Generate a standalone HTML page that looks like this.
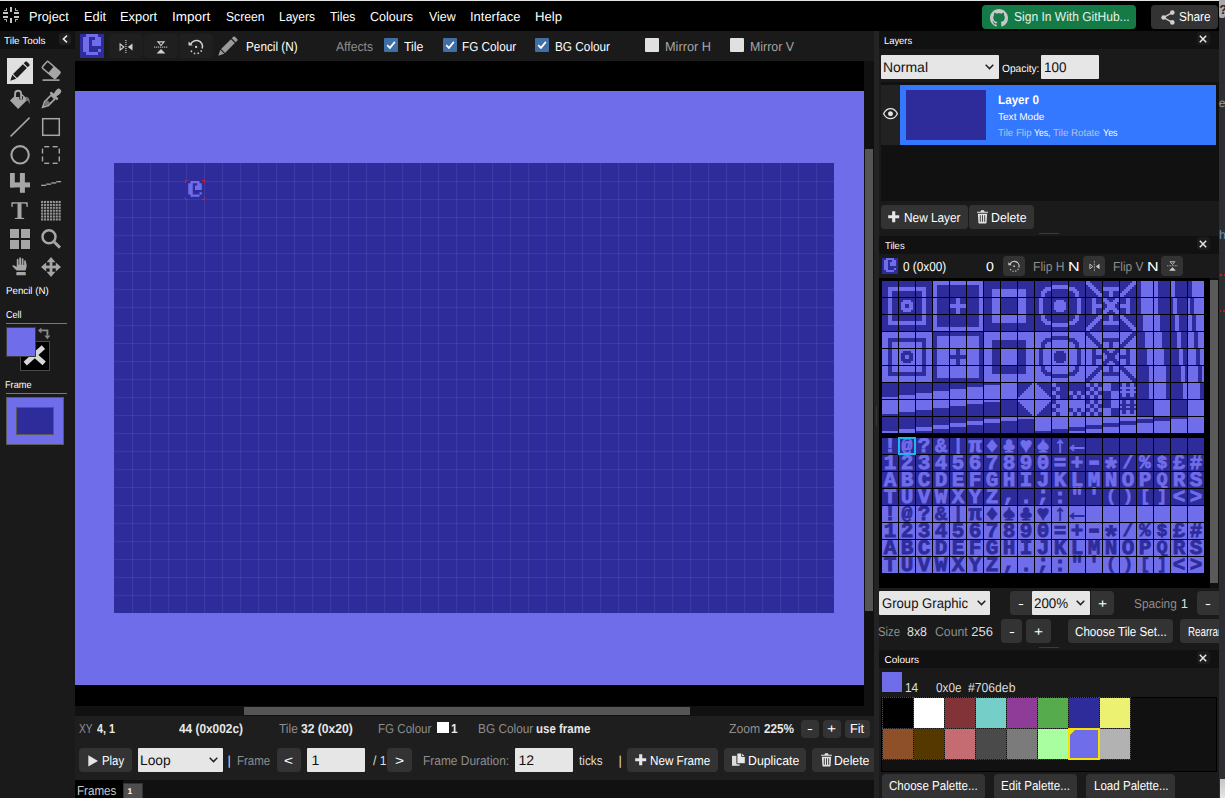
<!DOCTYPE html>
<html lang="en"><head><meta charset="utf-8"><title>Tile Editor</title>
<style>
html,body{margin:0;padding:0;}
body{width:1225px;height:798px;overflow:hidden;background:#1a1a1a;position:relative;font-family:"Liberation Sans",sans-serif;text-rendering:geometricPrecision;}
.t{position:absolute;white-space:nowrap;line-height:16px;height:16px;transform-origin:0 50%;}
.btn{position:absolute;background:#2b2b2b;border-radius:4px;box-sizing:border-box;}
.sel{position:absolute;background:#e6e6e6;box-sizing:border-box;border-radius:1px;}
svg{position:absolute;overflow:visible;}

.chk{position:absolute;width:14px;height:14px;box-sizing:border-box;border-radius:1px;}
.chk.on{background:#3f6fa5;}
.chk.off{background:#e0e0e0;}

</style></head><body>
<div id="app-chrome">
<div class="" style="position:absolute;left:0px;top:0px;width:1219px;height:31px;background:#000;"></div>
<div class="" style="position:absolute;left:0px;top:0px;width:1219px;height:1px;background:#e4e4e4;"></div>
<div class="" style="position:absolute;left:1219px;top:0px;width:6px;height:798px;background:#2b2d31;"></div>
<div class="" style="position:absolute;left:1219px;top:0px;width:6px;height:18px;background:#a9a9a9;border-radius:0 0 2px 2px;"></div>
<span class="t " style="left:1219.15px;top:2px;font-size:13.0px;color:#222;font-weight:bold;">?</span>
<div class="" style="position:absolute;left:0px;top:31px;width:75px;height:767px;background:#1a1a1a;"></div>
<div class="" style="position:absolute;left:0px;top:31px;width:75px;height:18px;background:#111;"></div>
<div class="" style="position:absolute;left:75px;top:31px;width:799px;height:30px;background:#1a1a1a;"></div>
<div class="" style="position:absolute;left:75px;top:61px;width:789px;height:645px;background:#000;"></div>
<div class="" style="position:absolute;left:75px;top:91px;width:789px;height:594px;background:#706deb;"></div>
<div class="" style="position:absolute;left:864px;top:61px;width:10px;height:655px;background:#111;"></div>
<div class="" style="position:absolute;left:865px;top:149px;width:8px;height:462px;background:#555;"></div>
<div class="" style="position:absolute;left:75px;top:706px;width:789px;height:10px;background:#111;"></div>
<div class="" style="position:absolute;left:244px;top:707px;width:446px;height:8px;background:#555;"></div>
<div class="" style="position:absolute;left:75px;top:716px;width:799px;height:64px;background:#1e1e1e;"></div>
<div class="" style="position:absolute;left:75px;top:780px;width:799px;height:18px;background:#111;"></div>
<div class="" style="position:absolute;left:874px;top:31px;width:5px;height:767px;background:#232323;"></div>
<div class="" style="position:absolute;left:876px;top:406px;width:1px;height:20px;background:#383838;"></div>
<div class="" style="position:absolute;left:879px;top:31px;width:340px;height:767px;background:#1a1a1a;"></div>
</div>
<nav id="menubar">
<svg style="left:3px;top:7px" width="16" height="16" viewBox="0 0 16 16" shape-rendering="crispEdges"><g fill="#c4c4c4"><rect x="7" y="0" width="2" height="5"/><rect x="7" y="11" width="2" height="5"/><rect x="0" y="5" width="5" height="2"/><rect x="0" y="9" width="5" height="2"/><rect x="11" y="5" width="5" height="2"/><rect x="11" y="9" width="5" height="2"/></g><g fill="#a8a8a8"><rect x="1" y="3" width="3" height="1"/><rect x="3" y="1" width="1" height="3"/><rect x="12" y="1" width="1" height="3"/><rect x="12" y="3" width="3" height="1"/><rect x="1" y="12" width="3" height="1"/><rect x="3" y="12" width="1" height="3"/><rect x="12" y="12" width="1" height="3"/><rect x="12" y="12" width="3" height="1"/></g></svg>
<span class="t " style="left:29.48px;top:9px;font-size:13.0px;color:#fff;transform:scaleX(0.9806);">Project</span>
<span class="t " style="left:83.98px;top:9px;font-size:13.0px;color:#fff;transform:scaleX(0.9850);">Edit</span>
<span class="t " style="left:120.47px;top:9px;font-size:13.0px;color:#fff;transform:scaleX(0.9890);">Export</span>
<span class="t " style="left:172.28px;top:9px;font-size:13.0px;color:#fff;transform:scaleX(1.0387);">Import</span>
<span class="t " style="left:225.89px;top:9px;font-size:13.0px;color:#fff;transform:scaleX(0.9332);">Screen</span>
<span class="t " style="left:278.54px;top:9px;font-size:13.0px;color:#fff;transform:scaleX(0.9215);">Layers</span>
<span class="t " style="left:330.26px;top:9px;font-size:13.0px;color:#fff;transform:scaleX(0.9376);">Tiles</span>
<span class="t " style="left:370.38px;top:9px;font-size:13.0px;color:#fff;transform:scaleX(0.9615);">Colours</span>
<span class="t " style="left:428.88px;top:9px;font-size:13.0px;color:#fff;transform:scaleX(0.9526);">View</span>
<span class="t " style="left:470.34px;top:9px;font-size:13.0px;color:#fff;transform:scaleX(0.9949);">Interface</span>
<span class="t " style="left:534.95px;top:9px;font-size:13.0px;color:#fff;transform:scaleX(1.0111);">Help</span>
<div class="" style="position:absolute;left:982px;top:5px;width:154px;height:24px;background:#147a46;border-radius:4px;"></div>
<svg style="left:990px;top:8.8px" width="18" height="18" viewBox="0 0 16 16"><path fill="#c8c8c8" d="M8 0C3.58 0 0 3.58 0 8c0 3.54 2.29 6.53 5.47 7.59.4.07.55-.17.55-.38 0-.19-.01-.82-.01-1.49-2.01.37-2.53-.49-2.69-.94-.09-.23-.48-.94-.82-1.13-.28-.15-.68-.52-.01-.53.63-.01 1.08.58 1.23.82.72 1.21 1.87.87 2.33.66.07-.52.28-.87.51-1.07-1.78-.2-3.64-.89-3.64-3.95 0-.87.31-1.59.82-2.15-.08-.2-.36-1.02.08-2.12 0 0 .67-.21 2.2.82.64-.18 1.32-.27 2-.27s1.36.09 2 .27c1.53-1.04 2.2-.82 2.2-.82.44 1.1.16 1.92.08 2.12.51.56.82 1.27.82 2.15 0 3.07-1.87 3.75-3.65 3.95.29.25.54.73.54 1.48 0 1.07-.01 1.93-.01 2.2 0 .21.15.46.55.38A8.01 8.01 0 0 0 16 8c0-4.42-3.58-8-8-8z"/></svg>
<span class="t " style="left:1013.90px;top:9px;font-size:13.0px;color:#e6f2ea;transform:scaleX(0.9250);">Sign In With GitHub...</span>
<div class="" style="position:absolute;left:1151px;top:5px;width:67px;height:24px;background:#333333;border-radius:4px;"></div>
<svg style="left:1161px;top:10.4px" width="14" height="15" viewBox="0 0 14 15"><g fill="#d0d0d0"><circle cx="11.3" cy="2.6" r="2.3"/><circle cx="2.6" cy="7.5" r="2.3"/><circle cx="11.3" cy="12.4" r="2.3"/></g><path d="M11.3 2.6L2.6 7.5l8.7 4.9" stroke="#d0d0d0" stroke-width="1.4" fill="none"/></svg>
<span class="t " style="left:1179.41px;top:9px;font-size:13.0px;color:#fff;transform:scaleX(0.9129);">Share</span>
</nav>
<aside id="tile-tools">
<span class="t " style="left:4.00px;top:34px;font-size:10.0px;color:#fff;transform:scaleX(0.9927);">Tile Tools</span>
<div class="" style="position:absolute;left:59px;top:33px;width:12px;height:12px;background:#1f1f1f;border-radius:3px;"></div>
<svg style="left:62px;top:35px" width="6" height="8" viewBox="0 0 6 8"><path d="M5 0.6L1.4 4 5 7.4" stroke="#e8e8e8" stroke-width="1.6" fill="none"/></svg>
<div class="" style="position:absolute;left:7px;top:58px;width:26px;height:26px;background:#e0e0e0;"></div>
<svg style="left:10px;top:61px" width="20" height="20" viewBox="0 0 20 20"><polygon fill="#1c1c1c" points="0.30,19.70 6.24,17.72 2.28,13.76"/><polygon fill="#1c1c1c" points="7.02,16.94 16.85,7.11 12.89,3.15 3.06,12.98"/><polygon fill="#1c1c1c" points="17.69,6.26 19.53,4.43 19.53,3.30 16.70,0.47 15.57,0.47 13.74,2.31"/></svg>
<svg style="left:41px;top:61px" width="20" height="20" viewBox="0 0 20 20"><g transform="rotate(41 10.2 8.9)"><rect x="0.8" y="3.8" width="18.8" height="10.2" rx="2" fill="#a6a6a6"/><rect x="2.3" y="5.3" width="7.6" height="7.2" fill="#1a1a1a"/></g><rect x="1.5" y="18.3" width="17" height="1.6" fill="#a6a6a6"/></svg>
<svg style="left:10px;top:89px" width="20" height="20" viewBox="0 0 20 20"><polygon points="0,11.5 4.1,7.4 6.3,7.9 10.1,7.9 12.5,5.2 17.7,10.4 8.1,20" fill="#a6a6a6"/><path d="M11.1 7V10.4" stroke="#1a1a1a" stroke-width="3.6" fill="none"/><path d="M5.1 7.8V4.7a3 3 0 0 1 6 0V9.6" stroke="#a6a6a6" stroke-width="1.9" fill="none" stroke-linecap="round"/><path d="M16.4 7.6c2.6 0.8 3.6 3.4 3.5 7.8-1.2-2.8-2.2-4-4.4-4.6z" fill="#777"/></svg>
<svg style="left:41px;top:89px" width="20" height="20" viewBox="0 0 20 20"><g transform="rotate(45 10 10)"><rect x="7.4" y="-3.4" width="5.2" height="7" rx="2.6" fill="#a6a6a6"/><rect x="8" y="2" width="4" height="3.4" fill="#a6a6a6"/><rect x="4.8" y="4.4" width="10.4" height="2.5" rx="0.9" fill="#a6a6a6"/><path d="M7.3 7.2h5.4v9.2l-2.7 5.4-2.7-5.4z" fill="none" stroke="#a6a6a6" stroke-width="1.6"/><path d="M8.1 13.4h3.8v3.2l-1.9 3.8-1.9-3.8z" fill="#777"/></g></svg>
<svg style="left:10px;top:117px" width="20" height="20" viewBox="0 0 20 20"><path d="M0.6 19.4L19.6 0.6" stroke="#a6a6a6" stroke-width="1.5"/></svg>
<svg style="left:41px;top:117px" width="20" height="20" viewBox="0 0 20 20"><rect x="1.7" y="1.7" width="16.6" height="16.6" fill="none" stroke="#a6a6a6" stroke-width="1.5"/></svg>
<svg style="left:10px;top:145px" width="20" height="20" viewBox="0 0 20 20"><circle cx="10.1" cy="9.8" r="8.7" fill="none" stroke="#a6a6a6" stroke-width="2.1"/></svg>
<svg style="left:41px;top:145px" width="20" height="20" viewBox="0 0 20 20"><g fill="#a6a6a6"><rect x="3.2" y="1" width="5" height="1.4"/><rect x="11.6" y="1" width="5" height="1.4"/><rect x="3.2" y="17.6" width="5" height="1.4"/><rect x="11.6" y="17.6" width="5" height="1.4"/><rect x="0.8" y="3.6" width="1.4" height="5"/><rect x="0.8" y="11.4" width="1.4" height="5"/><rect x="17.6" y="3.6" width="1.4" height="5"/><rect x="17.6" y="11.4" width="1.4" height="5"/></g></svg>
<svg style="left:10px;top:173px" width="20" height="20" viewBox="0 0 20 20"><g fill="#a6a6a6"><rect x="0" y="0" width="4.8" height="14.4"/><rect x="0" y="9.4" width="20" height="5"/><rect x="9.9" y="0" width="5" height="19.8"/></g></svg>
<svg style="left:41px;top:173px" width="20" height="20" viewBox="0 0 20 20"><g fill="#a6a6a6"><rect x="0.2" y="11.7" width="5" height="1.3"/><rect x="5.2" y="10.5" width="5" height="1.3"/><rect x="10.3" y="9.3" width="5" height="1.3"/><rect x="15.3" y="8" width="4.8" height="1.3"/></g></svg>
<span style="position:absolute;left:11.2px;top:196.4px;will-change:transform;font-family:'Liberation Serif',serif;font-weight:bold;font-size:25.6px;line-height:30px;color:#a6a6a6;transform:scaleX(1.0);transform-origin:0 0;">T</span>
<svg style="left:41px;top:201px" width="20" height="20" viewBox="0 0 20 20"><g fill="#959595"><rect x="0.10" y="-0.10" width="2.1" height="2.1"/><rect x="3.02" y="-0.10" width="2.1" height="2.1"/><rect x="5.94" y="-0.10" width="2.1" height="2.1"/><rect x="8.86" y="-0.10" width="2.1" height="2.1"/><rect x="11.78" y="-0.10" width="2.1" height="2.1"/><rect x="14.70" y="-0.10" width="2.1" height="2.1"/><rect x="17.62" y="-0.10" width="2.1" height="2.1"/><rect x="0.10" y="2.82" width="2.1" height="2.1"/><rect x="3.02" y="2.82" width="2.1" height="2.1"/><rect x="5.94" y="2.82" width="2.1" height="2.1"/><rect x="8.86" y="2.82" width="2.1" height="2.1"/><rect x="11.78" y="2.82" width="2.1" height="2.1"/><rect x="14.70" y="2.82" width="2.1" height="2.1"/><rect x="17.62" y="2.82" width="2.1" height="2.1"/><rect x="0.10" y="5.74" width="2.1" height="2.1"/><rect x="3.02" y="5.74" width="2.1" height="2.1"/><rect x="5.94" y="5.74" width="2.1" height="2.1"/><rect x="8.86" y="5.74" width="2.1" height="2.1"/><rect x="11.78" y="5.74" width="2.1" height="2.1"/><rect x="14.70" y="5.74" width="2.1" height="2.1"/><rect x="17.62" y="5.74" width="2.1" height="2.1"/><rect x="0.10" y="8.66" width="2.1" height="2.1"/><rect x="3.02" y="8.66" width="2.1" height="2.1"/><rect x="5.94" y="8.66" width="2.1" height="2.1"/><rect x="8.86" y="8.66" width="2.1" height="2.1"/><rect x="11.78" y="8.66" width="2.1" height="2.1"/><rect x="14.70" y="8.66" width="2.1" height="2.1"/><rect x="17.62" y="8.66" width="2.1" height="2.1"/><rect x="0.10" y="11.58" width="2.1" height="2.1"/><rect x="3.02" y="11.58" width="2.1" height="2.1"/><rect x="5.94" y="11.58" width="2.1" height="2.1"/><rect x="8.86" y="11.58" width="2.1" height="2.1"/><rect x="11.78" y="11.58" width="2.1" height="2.1"/><rect x="14.70" y="11.58" width="2.1" height="2.1"/><rect x="17.62" y="11.58" width="2.1" height="2.1"/><rect x="0.10" y="14.50" width="2.1" height="2.1"/><rect x="3.02" y="14.50" width="2.1" height="2.1"/><rect x="5.94" y="14.50" width="2.1" height="2.1"/><rect x="8.86" y="14.50" width="2.1" height="2.1"/><rect x="11.78" y="14.50" width="2.1" height="2.1"/><rect x="14.70" y="14.50" width="2.1" height="2.1"/><rect x="17.62" y="14.50" width="2.1" height="2.1"/><rect x="0.10" y="17.42" width="2.1" height="2.1"/><rect x="3.02" y="17.42" width="2.1" height="2.1"/><rect x="5.94" y="17.42" width="2.1" height="2.1"/><rect x="8.86" y="17.42" width="2.1" height="2.1"/><rect x="11.78" y="17.42" width="2.1" height="2.1"/><rect x="14.70" y="17.42" width="2.1" height="2.1"/><rect x="17.62" y="17.42" width="2.1" height="2.1"/></g></svg>
<svg style="left:10px;top:229px" width="20" height="20" viewBox="0 0 20 20"><g fill="#a6a6a6"><rect x="0" y="0" width="9" height="9"/><rect x="11" y="0" width="9" height="9"/><rect x="0" y="11" width="9" height="9"/><rect x="11" y="11" width="9" height="9"/></g></svg>
<svg style="left:41px;top:229px" width="20" height="20" viewBox="0 0 20 20"><circle cx="8" cy="7.8" r="6.5" fill="none" stroke="#a6a6a6" stroke-width="2.5"/><path d="M13.2 13L19 18.6" stroke="#a6a6a6" stroke-width="3"/></svg>
<svg style="left:10px;top:257px" width="20" height="20" viewBox="0 0 20 20"><g fill="#a6a6a6" transform="translate(0.6 0.3) scale(1.1 1)"><rect x="5.2" y="14.8" width="8.6" height="3.2" rx="0.6"/><path d="M5.4 13.2L1.8 9.2c-.5-.9.6-1.6 1.4-1L5.6 9.4V2.4c0-1.1 1.6-1.1 1.6 0V7.4h.6V.9c0-1.1 1.7-1.1 1.7 0V7.4h.6V1.7c0-1.1 1.6-1.1 1.6 0V7.6h.6V3.6c0-1 1.5-1 1.5 0l.8 4.2c0 2.8-.5 3.6-1 5.4z"/></g></svg>
<svg style="left:41px;top:257px" width="20" height="20" viewBox="0 0 20 20"><g fill="#a6a6a6"><rect x="8.6" y="3" width="2.8" height="14"/><rect x="3" y="8.6" width="14" height="2.8"/><path d="M10 0l4.4 5.2H5.6zM10 20l4.4-5.2H5.6zM0 10l5.2-4.4v8.8zM20 10l-5.2-4.4v8.8z"/></g></svg>
<span class="t " style="left:5.72px;top:284px;font-size:10.0px;color:#fff;transform:scaleX(0.9741);">Pencil (N)</span>
<span class="t " style="left:5.75px;top:308px;font-size:10.0px;color:#fff;transform:scaleX(0.8944);">Cell</span>
<div class="" style="position:absolute;left:6px;top:323px;width:61px;height:1px;background:#787878;"></div>
<div class="" style="position:absolute;left:20px;top:341px;width:30px;height:30px;background:#000;box-sizing:border-box;border:1px solid #4a4a4a;"></div>
<svg style="left:21px;top:342px;overflow:hidden" width="28" height="28" viewBox="21 342 28 28"><path d="M25.2 363.6L43.4 347.2M28 349L44.2 363.4" stroke="#d6d6d6" stroke-width="5"/></svg>
<div class="" style="position:absolute;left:6px;top:327px;width:30px;height:30px;background:#706deb;box-sizing:border-box;border:1px solid #3c3c3c;"></div>
<svg style="left:38px;top:327px" width="12" height="12" viewBox="0 0 12 12"><path d="M2.4 3.4H9.4V8.6" stroke="#8a8a8a" stroke-width="1.9" fill="none"/><path d="M0 3.4l3.4-3v6zM9.4 12.2l-3-3.8h6z" fill="#8a8a8a"/></svg>
<span class="t " style="left:5.46px;top:378px;font-size:10.0px;color:#fff;transform:scaleX(0.9203);">Frame</span>
<div class="" style="position:absolute;left:6px;top:393px;width:61px;height:1px;background:#787878;"></div>
<div class="" style="position:absolute;left:6px;top:397px;width:58px;height:48px;background:#706deb;box-sizing:border-box;border:1px solid #5a5a5a;"></div>
<div class="" style="position:absolute;left:16px;top:407px;width:38px;height:28px;background:#2e2c9b;box-sizing:border-box;border:1px solid #5a5a5a;"></div>
</aside>
<div id="tool-options">
<svg style="left:80px;top:34px" width="24" height="24" shape-rendering="crispEdges"><rect x="0" y="0" width="24" height="24" fill="#2e2c9b"/><rect x="6" y="0" width="12" height="3" fill="#706deb"/><rect x="3" y="3" width="6" height="3" fill="#706deb"/><rect x="15" y="3" width="6" height="3" fill="#706deb"/><rect x="3" y="6" width="6" height="3" fill="#706deb"/><rect x="12" y="6" width="9" height="3" fill="#706deb"/><rect x="3" y="9" width="6" height="3" fill="#706deb"/><rect x="12" y="9" width="9" height="3" fill="#706deb"/><rect x="3" y="12" width="6" height="3" fill="#706deb"/><rect x="3" y="15" width="6" height="3" fill="#706deb"/><rect x="18" y="15" width="3" height="3" fill="#706deb"/><rect x="6" y="18" width="12" height="3" fill="#706deb"/></svg>
<div class="" style="position:absolute;left:109px;top:34px;width:34px;height:24px;background:#1f1f1f;border-radius:4px;"></div>
<svg style="left:119px;top:39.8px" width="14.00" height="14.00" viewBox="0 0 14 14"><path d="M1.1 4L4.9 7 1.1 10z" fill="none" stroke="#d0d0d0" stroke-width="1.1"/><path d="M13.5 3.4L8.8 7l4.7 3.6z" fill="#d0d0d0"/><path d="M6.9 0v13.6" stroke="#d0d0d0" stroke-width="1.2" stroke-dasharray="1 1"/></svg>
<div class="" style="position:absolute;left:144px;top:34px;width:34px;height:24px;background:#1f1f1f;border-radius:4px;"></div>
<svg style="left:154.1px;top:40.5px" width="14.00" height="13.00" viewBox="0 0 14 13"><path d="M3.9 0.9L7 4.5 10.1 0.9z" fill="none" stroke="#d0d0d0" stroke-width="1.1"/><path d="M2.6 12.6L7 7.9l4.4 4.7z" fill="#d0d0d0"/><path d="M0.2 6.1h13.4" stroke="#d0d0d0" stroke-width="1.2" stroke-dasharray="1 1"/></svg>
<div class="" style="position:absolute;left:179px;top:34px;width:34px;height:24px;background:#1f1f1f;border-radius:4px;"></div>
<svg style="left:188.4px;top:40px" width="16.00" height="15.00" viewBox="0 0 16 15"><path d="M2.6 4.6A6.1 6.1 0 0 1 14.2 8.6" fill="none" stroke="#d0d0d0" stroke-width="1.5"/><path d="M0.5 1.6L4.8 5.6H0.5z" fill="#d0d0d0"/><path d="M13.6 10.4A6.1 6.1 0 0 1 2.3 9" fill="none" stroke="#d0d0d0" stroke-width="1.6" stroke-dasharray="1.5 2.2"/><rect x="7.1" y="5.9" width="2" height="2" fill="#d0d0d0"/></svg>
<svg style="left:218px;top:36px" width="20" height="20" viewBox="0 0 20 20"><polygon fill="#9a9a9a" points="0.30,19.70 6.24,17.72 2.28,13.76"/><polygon fill="#9a9a9a" points="7.02,16.94 16.85,7.11 12.89,3.15 3.06,12.98"/><polygon fill="#9a9a9a" points="17.69,6.26 19.53,4.43 19.53,3.30 16.70,0.47 15.57,0.47 13.74,2.31"/></svg>
<span class="t " style="left:245.56px;top:39px;font-size:13.0px;color:#fff;transform:scaleX(0.9050);">Pencil (N)</span>
<span class="t " style="left:336.00px;top:39px;font-size:13.0px;color:#8e8e8e;transform:scaleX(0.9359);">Affects</span>
<div class="chk on" style="left:384px;top:38px"><svg style="left:2px;top:2px" width="10" height="10" viewBox="0 0 10 10"><path d="M1.2 5.2L3.9 7.9 8.9 1.9" stroke="#fff" stroke-width="1.7" fill="none"/></svg></div>
<span class="t " style="left:404.25px;top:39px;font-size:13.0px;color:#fff;transform:scaleX(0.9424);">Tile</span>
<div class="chk on" style="left:443px;top:38px"><svg style="left:2px;top:2px" width="10" height="10" viewBox="0 0 10 10"><path d="M1.2 5.2L3.9 7.9 8.9 1.9" stroke="#fff" stroke-width="1.7" fill="none"/></svg></div>
<span class="t " style="left:461.86px;top:39px;font-size:13.0px;color:#fff;transform:scaleX(0.9020);">FG Colour</span>
<div class="chk on" style="left:535px;top:38px"><svg style="left:2px;top:2px" width="10" height="10" viewBox="0 0 10 10"><path d="M1.2 5.2L3.9 7.9 8.9 1.9" stroke="#fff" stroke-width="1.7" fill="none"/></svg></div>
<span class="t " style="left:554.66px;top:39px;font-size:13.0px;color:#fff;transform:scaleX(0.9070);">BG Colour</span>
<div class="chk off" style="left:645px;top:38px"></div>
<span class="t " style="left:664.98px;top:39px;font-size:13.0px;color:#a4a4a4;transform:scaleX(0.9810);">Mirror H</span>
<div class="chk off" style="left:730px;top:38px"></div>
<span class="t " style="left:750.01px;top:39px;font-size:13.0px;color:#a4a4a4;transform:scaleX(0.9532);">Mirror V</span>
</div>
<main id="canvas-view">
<svg style="left:114px;top:163px" width="720" height="450"><rect width="720" height="450" fill="#2e2c9b" shape-rendering="crispEdges"/><g fill="#ffffff" fill-opacity="0.07"><rect x="17.85" y="0" width="1.3" height="450"/><rect x="35.85" y="0" width="1.3" height="450"/><rect x="53.85" y="0" width="1.3" height="450"/><rect x="71.85" y="0" width="1.3" height="450"/><rect x="89.85" y="0" width="1.3" height="450"/><rect x="107.85" y="0" width="1.3" height="450"/><rect x="125.85" y="0" width="1.3" height="450"/><rect x="143.85" y="0" width="1.3" height="450"/><rect x="161.85" y="0" width="1.3" height="450"/><rect x="179.85" y="0" width="1.3" height="450"/><rect x="197.85" y="0" width="1.3" height="450"/><rect x="215.85" y="0" width="1.3" height="450"/><rect x="233.85" y="0" width="1.3" height="450"/><rect x="251.85" y="0" width="1.3" height="450"/><rect x="269.85" y="0" width="1.3" height="450"/><rect x="287.85" y="0" width="1.3" height="450"/><rect x="305.85" y="0" width="1.3" height="450"/><rect x="323.85" y="0" width="1.3" height="450"/><rect x="341.85" y="0" width="1.3" height="450"/><rect x="359.85" y="0" width="1.3" height="450"/><rect x="377.85" y="0" width="1.3" height="450"/><rect x="395.85" y="0" width="1.3" height="450"/><rect x="413.85" y="0" width="1.3" height="450"/><rect x="431.85" y="0" width="1.3" height="450"/><rect x="449.85" y="0" width="1.3" height="450"/><rect x="467.85" y="0" width="1.3" height="450"/><rect x="485.85" y="0" width="1.3" height="450"/><rect x="503.85" y="0" width="1.3" height="450"/><rect x="521.85" y="0" width="1.3" height="450"/><rect x="539.85" y="0" width="1.3" height="450"/><rect x="557.85" y="0" width="1.3" height="450"/><rect x="575.85" y="0" width="1.3" height="450"/><rect x="593.85" y="0" width="1.3" height="450"/><rect x="611.85" y="0" width="1.3" height="450"/><rect x="629.85" y="0" width="1.3" height="450"/><rect x="647.85" y="0" width="1.3" height="450"/><rect x="665.85" y="0" width="1.3" height="450"/><rect x="683.85" y="0" width="1.3" height="450"/><rect x="701.85" y="0" width="1.3" height="450"/><rect x="0" y="17.85" width="720" height="1.3"/><rect x="0" y="35.85" width="720" height="1.3"/><rect x="0" y="53.85" width="720" height="1.3"/><rect x="0" y="71.85" width="720" height="1.3"/><rect x="0" y="89.85" width="720" height="1.3"/><rect x="0" y="107.85" width="720" height="1.3"/><rect x="0" y="125.85" width="720" height="1.3"/><rect x="0" y="143.85" width="720" height="1.3"/><rect x="0" y="161.85" width="720" height="1.3"/><rect x="0" y="179.85" width="720" height="1.3"/><rect x="0" y="197.85" width="720" height="1.3"/><rect x="0" y="215.85" width="720" height="1.3"/><rect x="0" y="233.85" width="720" height="1.3"/><rect x="0" y="251.85" width="720" height="1.3"/><rect x="0" y="269.85" width="720" height="1.3"/><rect x="0" y="287.85" width="720" height="1.3"/><rect x="0" y="305.85" width="720" height="1.3"/><rect x="0" y="323.85" width="720" height="1.3"/><rect x="0" y="341.85" width="720" height="1.3"/><rect x="0" y="359.85" width="720" height="1.3"/><rect x="0" y="377.85" width="720" height="1.3"/><rect x="0" y="395.85" width="720" height="1.3"/><rect x="0" y="413.85" width="720" height="1.3"/><rect x="0" y="431.85" width="720" height="1.3"/></g></svg>
<svg style="left:186px;top:181px" width="18" height="18" viewBox="0 0 8 8"><rect width="8" height="8" fill="#2e2c9b"/><path d="M2 0h4v1h-4zM1 1h2v1h-2zM5 1h2v1h-2zM1 2h2v1h-2zM4 2h3v1h-3zM1 3h2v1h-2zM4 3h3v1h-3zM1 4h2v1h-2zM1 5h2v1h-2zM6 5h1v1h-1zM2 6h4v1h-4z" fill="#706deb"/></svg>
<svg style="left:185px;top:180px" width="20" height="20" viewBox="0 0 20 20"><path d="M0.5 3V0.5H3M17 0.5H19.5V3M19.5 17V19.5H17M3 19.5H0.5V17" stroke="#d0202f" stroke-width="1" fill="none"/></svg>
</main>
<div id="status-bar">
<span class="t " style="left:78.70px;top:721px;font-size:13.0px;color:#8e8e8e;transform:scaleX(0.7812);">XY</span>
<span class="t " style="left:97.09px;top:721px;font-size:13.0px;color:#e8e8e8;font-weight:bold;transform:scaleX(0.8306);">4, 1</span>
<span class="t " style="left:178.88px;top:721px;font-size:13.0px;color:#e8e8e8;font-weight:bold;transform:scaleX(0.9121);">44 (0x002c)</span>
<span class="t " style="left:278.76px;top:721px;font-size:13.0px;color:#8e8e8e;transform:scaleX(0.9170);">Tile</span>
<span class="t " style="left:300.76px;top:721px;font-size:13.0px;color:#e8e8e8;font-weight:bold;transform:scaleX(0.9318);">32 (0x20)</span>
<span class="t " style="left:378.37px;top:721px;font-size:13.0px;color:#8e8e8e;transform:scaleX(0.8901);">FG Colour</span>
<div class="" style="position:absolute;left:436.5px;top:721.5px;width:12px;height:11px;background:#fff;"></div>
<span class="t " style="left:450.50px;top:721px;font-size:13.0px;color:#e8e8e8;font-weight:bold;transform:scaleX(0.9002);">1</span>
<span class="t " style="left:478.05px;top:721px;font-size:13.0px;color:#8e8e8e;transform:scaleX(0.9103);">BG Colour</span>
<span class="t " style="left:536.31px;top:721px;font-size:13.0px;color:#e8e8e8;font-weight:bold;transform:scaleX(0.8855);">use frame</span>
<span class="t " style="left:728.63px;top:721px;font-size:13.0px;color:#8e8e8e;transform:scaleX(0.9381);">Zoom</span>
<span class="t " style="left:763.65px;top:721px;font-size:13.0px;color:#e8e8e8;font-weight:bold;transform:scaleX(0.9046);">225%</span>
<div class="" style="position:absolute;left:801px;top:720px;width:18px;height:18px;background:#333333;border-radius:4px;"></div>
<span class="t " style="left:806.90px;top:721px;font-size:13.0px;color:#fff;transform:scaleX(1.3538);">-</span>
<div class="" style="position:absolute;left:823px;top:720px;width:18px;height:18px;background:#333333;border-radius:4px;"></div>
<span class="t " style="left:827.42px;top:721px;font-size:13.0px;color:#fff;transform:scaleX(1.1931);">+</span>
<div class="" style="position:absolute;left:845px;top:720px;width:25px;height:18px;background:#333333;border-radius:4px;"></div>
<span class="t " style="left:850.18px;top:721px;font-size:13.0px;color:#fff;transform:scaleX(0.9804);">Fit</span>
</div>
<div id="playback">
<div class="" style="position:absolute;left:79px;top:748px;width:53px;height:24px;background:#333333;border-radius:4px;"></div>
<svg style="left:88px;top:754.5px" width="10.4" height="11.8" viewBox="0 0 10 12" preserveAspectRatio="none"><path d="M0.3 0.2L9.6 6 0.3 11.8z" fill="#e6e6e6"/></svg>
<span class="t " style="left:101.89px;top:753px;font-size:13.0px;color:#fff;transform:scaleX(0.8721);">Play</span>
<div class="" style="position:absolute;left:138px;top:748px;width:85px;height:24px;background:#e6e6e6;border-radius:1px;"></div>
<span class="t " style="left:140.20px;top:752px;font-size:14.0px;color:#111;transform:scaleX(0.9851);">Loop</span>
<svg style="left:209px;top:757.0px" width="9" height="6" viewBox="0 0 9 6"><path d="M0.7 0.8L4.5 4.6 8.3 0.8" stroke="#222" stroke-width="1.5" fill="none"/></svg>
<span class="t " style="left:227.43px;top:753px;font-size:13.0px;color:#ddd;">|</span>
<span class="t " style="left:237.38px;top:753px;font-size:13.0px;color:#8e8e8e;transform:scaleX(0.8835);">Frame</span>
<div class="" style="position:absolute;left:276.5px;top:748px;width:24.5px;height:24px;background:#333333;border-radius:4px;"></div>
<span class="t " style="left:284.22px;top:753px;font-size:13.0px;color:#fff;transform:scaleX(1.1931);">&lt;</span>
<div class="" style="position:absolute;left:307px;top:748px;width:58px;height:24px;background:#e6e6e6;border-radius:1px;"></div>
<span class="t " style="left:311.58px;top:752px;font-size:14.0px;color:#111;">1</span>
<span class="t " style="left:372.80px;top:753px;font-size:13.0px;color:#ddd;transform:scaleX(0.9346);">/ 1</span>
<div class="" style="position:absolute;left:387px;top:748px;width:24.5px;height:24px;background:#333333;border-radius:4px;"></div>
<span class="t " style="left:394.62px;top:753px;font-size:13.0px;color:#fff;transform:scaleX(1.1931);">&gt;</span>
<span class="t " style="left:423.45px;top:753px;font-size:13.0px;color:#8e8e8e;transform:scaleX(0.9174);">Frame Duration:</span>
<div class="" style="position:absolute;left:515px;top:748px;width:58px;height:24px;background:#e6e6e6;border-radius:1px;"></div>
<span class="t " style="left:518.58px;top:752px;font-size:14.0px;color:#111;">12</span>
<span class="t " style="left:579.38px;top:753px;font-size:13.0px;color:#ddd;transform:scaleX(0.9073);">ticks</span>
<span class="t " style="left:618.53px;top:753px;font-size:13.0px;color:#ddd;">|</span>
<div class="" style="position:absolute;left:627px;top:748px;width:90.6px;height:24px;background:#333333;border-radius:4px;"></div>
<svg style="left:635px;top:754.3px" width="11.4" height="11.4" viewBox="0 0 12 12"><path d="M6 0.2V11.8M0.2 6H11.8" stroke="#e6e6e6" stroke-width="3.3"/></svg>
<span class="t " style="left:650.37px;top:753px;font-size:13.0px;color:#fff;transform:scaleX(0.8959);">New Frame</span>
<div class="" style="position:absolute;left:724px;top:748px;width:82px;height:24px;background:#333333;border-radius:4px;"></div>
<svg style="left:731.6px;top:753.2px" width="13.6" height="13" viewBox="0 0 13.6 13"><rect x="0" y="2.8" width="7.6" height="10" fill="#dcdcdc"/><path d="M4.9 0h4.9l3.5 3.3v7.5H4.9z" fill="#e8e8e8" stroke="#333" stroke-width="1"/><path d="M9.6 0.2v3.3h3.5" fill="none" stroke="#333" stroke-width="0.9"/></svg>
<span class="t " style="left:747.62px;top:753px;font-size:13.0px;color:#fff;transform:scaleX(0.9463);">Duplicate</span>
<div class="" style="position:absolute;left:812.3px;top:748px;width:61.7px;height:24px;background:#333333;border-radius:4px 0 0 4px;"></div>
<svg style="left:820.5px;top:752.9px" width="11" height="13.6" viewBox="0 0 11.6 13" preserveAspectRatio="none"><path d="M0 2.7h11.6V1.6H8l-.7-1.4H4.3L3.6 1.6H0z" fill="#e2e2e2"/><path d="M0.9 3.6h9.8l-.6 8.3c0 .6-.5 1.1-1.1 1.1H2.6c-.6 0-1.1-.5-1.1-1.1z" fill="#e2e2e2"/><path d="M3.5 5v6.3M5.8 5v6.3M8.1 5v6.3" stroke="#333333" stroke-width="0.9"/></svg>
<span class="t " style="left:834.22px;top:753px;font-size:13.0px;color:#fff;transform:scaleX(0.9420);">Delete</span>
</div>
<div id="frames-bar">
<div class="" style="position:absolute;left:75px;top:780px;width:48px;height:18px;background:#000;"></div>
<span class="t " style="left:76.57px;top:783px;font-size:13.0px;color:#c8c8c8;transform:scaleX(0.8939);">Frames</span>
<div class="" style="position:absolute;left:123px;top:783px;width:19.5px;height:15px;background:#4e4e4e;box-sizing:border-box;border:1px solid #333;border-bottom:none;"></div>
<span class="t " style="left:127.49px;top:783px;font-size:8.5px;color:#fff;font-weight:bold;">1</span>
</div>
<section id="panel-layers">
<div class="" style="position:absolute;left:879px;top:31px;width:340px;height:18px;background:#111;"></div>
<span class="t " style="left:884.25px;top:34px;font-size:10.0px;color:#fff;transform:scaleX(0.9375);">Layers</span>
<div class="" style="position:absolute;left:1197px;top:32px;width:13px;height:13px;background:#1c1c1c;border-radius:3px;"></div>
<svg style="left:1199.3px;top:34.6px" width="8" height="8" viewBox="0 0 8 8"><path d="M0.8 0.8L7.2 7.2M7.2 0.8L0.8 7.2" stroke="#e8e8e8" stroke-width="1.5"/></svg>
<div class="" style="position:absolute;left:881px;top:55px;width:118px;height:24px;background:#e6e6e6;border-radius:1px;"></div>
<span class="t " style="left:882.88px;top:59px;font-size:14.0px;color:#111;">Normal</span>
<svg style="left:985px;top:64.0px" width="9" height="6" viewBox="0 0 9 6"><path d="M0.7 0.8L4.5 4.6 8.3 0.8" stroke="#222" stroke-width="1.5" fill="none"/></svg>
<span class="t " style="left:1001.69px;top:61px;font-size:10.5px;color:#fff;transform:scaleX(0.9713);">Opacity:</span>
<div class="" style="position:absolute;left:1041px;top:55px;width:58px;height:24px;background:#e6e6e6;border-radius:1px;"></div>
<span class="t " style="left:1044.43px;top:59px;font-size:14.0px;color:#111;transform:scaleX(0.9585);">100</span>
<div class="" style="position:absolute;left:881px;top:82px;width:338px;height:119px;background:#111;"></div>
<div class="" style="position:absolute;left:881px;top:85px;width:19px;height:60px;background:#222;"></div>
<svg style="left:882.6px;top:108.4px" width="15" height="11.4" viewBox="0 0 15 11.4"><path d="M0.6 5.7C2.4 2.2 4.8 0.7 7.5 0.7s5.1 1.5 6.9 5c-1.8 3.5-4.2 5-6.9 5S2.4 9.2 0.6 5.7z" fill="none" stroke="#e4e4e4" stroke-width="1.3"/><circle cx="7.5" cy="5.7" r="2.5" fill="#e4e4e4"/></svg>
<div class="" style="position:absolute;left:900px;top:85px;width:316px;height:60px;background:#3478ff;"></div>
<div class="" style="position:absolute;left:906px;top:90px;width:80px;height:50px;background:#2e2c9b;"></div>
<span class="t " style="left:997.78px;top:92px;font-size:12.5px;color:#fff;font-weight:bold;transform:scaleX(0.9341);">Layer 0</span>
<span class="t " style="left:998.40px;top:110px;font-size:10.0px;color:#fff;transform:scaleX(1.0044);">Text Mode</span>
<span class="t " style="left:997.81px;top:126px;font-size:10.0px;color:#b4c4e4;transform:scaleX(0.9677);">Tile Flip</span>
<span class="t " style="left:1034.33px;top:126px;font-size:10.0px;color:#fff;transform:scaleX(0.8611);">Yes,</span>
<span class="t " style="left:1053.31px;top:126px;font-size:10.0px;color:#b4c4e4;transform:scaleX(0.9725);">Tile Rotate</span>
<span class="t " style="left:1102.82px;top:126px;font-size:10.0px;color:#fff;transform:scaleX(0.8917);">Yes</span>
<div class="" style="position:absolute;left:881.3px;top:205px;width:86.7px;height:24px;background:#333333;border-radius:4px;"></div>
<svg style="left:888.4px;top:211.3px" width="11.4" height="11.4" viewBox="0 0 12 12"><path d="M6 0.2V11.8M0.2 6H11.8" stroke="#e6e6e6" stroke-width="3.3"/></svg>
<span class="t " style="left:903.55px;top:210px;font-size:13.0px;color:#fff;transform:scaleX(0.9103);">New Layer</span>
<div class="" style="position:absolute;left:969.3px;top:205px;width:64.7px;height:24px;background:#333333;border-radius:4px;"></div>
<svg style="left:977.2px;top:209.9px" width="11" height="13.6" viewBox="0 0 11.6 13" preserveAspectRatio="none"><path d="M0 2.7h11.6V1.6H8l-.7-1.4H4.3L3.6 1.6H0z" fill="#e2e2e2"/><path d="M0.9 3.6h9.8l-.6 8.3c0 .6-.5 1.1-1.1 1.1H2.6c-.6 0-1.1-.5-1.1-1.1z" fill="#e2e2e2"/><path d="M3.5 5v6.3M5.8 5v6.3M8.1 5v6.3" stroke="#333333" stroke-width="0.9"/></svg>
<span class="t " style="left:991.01px;top:210px;font-size:13.0px;color:#fff;transform:scaleX(0.9476);">Delete</span>
<div class="" style="position:absolute;left:1039px;top:233px;width:20px;height:1px;background:#3a3a3a;"></div>
</section>
<section id="panel-tiles">
<div class="" style="position:absolute;left:879px;top:236px;width:340px;height:18px;background:#111;"></div>
<span class="t " style="left:884.81px;top:239px;font-size:10.0px;color:#fff;transform:scaleX(0.9453);">Tiles</span>
<div class="" style="position:absolute;left:1197px;top:237px;width:13px;height:13px;background:#1c1c1c;border-radius:3px;"></div>
<svg style="left:1199.3px;top:239.6px" width="8" height="8" viewBox="0 0 8 8"><path d="M0.8 0.8L7.2 7.2M7.2 0.8L0.8 7.2" stroke="#e8e8e8" stroke-width="1.5"/></svg>
<svg style="left:882px;top:258px" width="16" height="16" shape-rendering="crispEdges"><rect x="0" y="0" width="16" height="16" fill="#2e2c9b"/><rect x="4" y="0" width="8" height="2" fill="#706deb"/><rect x="2" y="2" width="4" height="2" fill="#706deb"/><rect x="10" y="2" width="4" height="2" fill="#706deb"/><rect x="2" y="4" width="4" height="2" fill="#706deb"/><rect x="8" y="4" width="6" height="2" fill="#706deb"/><rect x="2" y="6" width="4" height="2" fill="#706deb"/><rect x="8" y="6" width="6" height="2" fill="#706deb"/><rect x="2" y="8" width="4" height="2" fill="#706deb"/><rect x="2" y="10" width="4" height="2" fill="#706deb"/><rect x="12" y="10" width="2" height="2" fill="#706deb"/><rect x="4" y="12" width="8" height="2" fill="#706deb"/></svg>
<span class="t " style="left:902.53px;top:259px;font-size:13.0px;color:#fff;transform:scaleX(0.9050);">0 (0x00)</span>
<span class="t " style="left:985.83px;top:259px;font-size:13.0px;color:#fff;transform:scaleX(1.0897);">0</span>
<div class="" style="position:absolute;left:1003px;top:256px;width:22px;height:20px;background:#333333;border-radius:4px;"></div>
<svg style="left:1007.8px;top:260.6px" width="12.16" height="11.40" viewBox="0 0 16 15"><path d="M2.6 4.6A6.1 6.1 0 0 1 14.2 8.6" fill="none" stroke="#cfcfcf" stroke-width="1.5"/><path d="M0.5 1.6L4.8 5.6H0.5z" fill="#cfcfcf"/><path d="M13.6 10.4A6.1 6.1 0 0 1 2.3 9" fill="none" stroke="#cfcfcf" stroke-width="1.6" stroke-dasharray="1.5 2.2"/><rect x="7.1" y="5.9" width="2" height="2" fill="#cfcfcf"/></svg>
<span class="t " style="left:1033.43px;top:259px;font-size:13.0px;color:#8e8e8e;transform:scaleX(0.9294);">Flip H</span>
<span class="t " style="left:1067.71px;top:259px;font-size:13.0px;color:#fff;transform:scaleX(1.2363);">N</span>
<div class="" style="position:absolute;left:1083px;top:256px;width:22px;height:20px;background:#333333;border-radius:4px;"></div>
<svg style="left:1088.6px;top:260.8px" width="10.92" height="10.92" viewBox="0 0 14 14"><path d="M1.1 4L4.9 7 1.1 10z" fill="none" stroke="#cfcfcf" stroke-width="1.1"/><path d="M13.5 3.4L8.8 7l4.7 3.6z" fill="#cfcfcf"/><path d="M6.9 0v13.6" stroke="#cfcfcf" stroke-width="1.2" stroke-dasharray="1 1"/></svg>
<span class="t " style="left:1112.65px;top:259px;font-size:13.0px;color:#8e8e8e;transform:scaleX(0.9156);">Flip V</span>
<span class="t " style="left:1146.71px;top:259px;font-size:13.0px;color:#fff;transform:scaleX(1.2363);">N</span>
<div class="" style="position:absolute;left:1160.7px;top:256px;width:22px;height:20px;background:#333333;border-radius:4px;"></div>
<svg style="left:1167.2px;top:261px" width="10.92" height="10.14" viewBox="0 0 14 13"><path d="M3.9 0.9L7 4.5 10.1 0.9z" fill="none" stroke="#cfcfcf" stroke-width="1.1"/><path d="M2.6 12.6L7 7.9l4.4 4.7z" fill="#cfcfcf"/><path d="M0.2 6.1h13.4" stroke="#cfcfcf" stroke-width="1.2" stroke-dasharray="1 1"/></svg>
<div class="" style="position:absolute;left:879px;top:278px;width:331px;height:310px;background:#000;"></div>
<div class="" style="position:absolute;left:1210px;top:278px;width:9px;height:310px;background:#111;"></div>
<div class="" style="position:absolute;left:1210px;top:280px;width:8px;height:303px;background:#5a5a5a;"></div>
<svg style="left:879px;top:278px" width="331" height="310" viewBox="0 0 331 310"><clipPath id="tclip"><path d="M3 160h16v16h-16zM20 160h16v16h-16zM37 160h16v16h-16zM54 160h16v16h-16zM71 160h16v16h-16zM88 160h16v16h-16zM105 160h16v16h-16zM122 160h16v16h-16zM139 160h16v16h-16zM156 160h16v16h-16zM173 160h16v16h-16zM190 160h16v16h-16zM207 160h16v16h-16zM224 160h16v16h-16zM241 160h16v16h-16zM258 160h16v16h-16zM275 160h16v16h-16zM292 160h16v16h-16zM309 160h16v16h-16zM3 177h16v16h-16zM20 177h16v16h-16zM37 177h16v16h-16zM54 177h16v16h-16zM71 177h16v16h-16zM88 177h16v16h-16zM105 177h16v16h-16zM122 177h16v16h-16zM139 177h16v16h-16zM156 177h16v16h-16zM173 177h16v16h-16zM190 177h16v16h-16zM207 177h16v16h-16zM224 177h16v16h-16zM241 177h16v16h-16zM258 177h16v16h-16zM275 177h16v16h-16zM292 177h16v16h-16zM309 177h16v16h-16zM3 194h16v16h-16zM20 194h16v16h-16zM37 194h16v16h-16zM54 194h16v16h-16zM71 194h16v16h-16zM88 194h16v16h-16zM105 194h16v16h-16zM122 194h16v16h-16zM139 194h16v16h-16zM156 194h16v16h-16zM173 194h16v16h-16zM190 194h16v16h-16zM207 194h16v16h-16zM224 194h16v16h-16zM241 194h16v16h-16zM258 194h16v16h-16zM275 194h16v16h-16zM292 194h16v16h-16zM309 194h16v16h-16zM3 211h16v16h-16zM20 211h16v16h-16zM37 211h16v16h-16zM54 211h16v16h-16zM71 211h16v16h-16zM88 211h16v16h-16zM105 211h16v16h-16zM122 211h16v16h-16zM139 211h16v16h-16zM156 211h16v16h-16zM173 211h16v16h-16zM190 211h16v16h-16zM207 211h16v16h-16zM224 211h16v16h-16zM241 211h16v16h-16zM258 211h16v16h-16zM275 211h16v16h-16zM292 211h16v16h-16zM309 211h16v16h-16zM3 228h16v16h-16zM20 228h16v16h-16zM37 228h16v16h-16zM54 228h16v16h-16zM71 228h16v16h-16zM88 228h16v16h-16zM105 228h16v16h-16zM122 228h16v16h-16zM139 228h16v16h-16zM156 228h16v16h-16zM173 228h16v16h-16zM190 228h16v16h-16zM207 228h16v16h-16zM224 228h16v16h-16zM241 228h16v16h-16zM258 228h16v16h-16zM275 228h16v16h-16zM292 228h16v16h-16zM309 228h16v16h-16zM3 245h16v16h-16zM20 245h16v16h-16zM37 245h16v16h-16zM54 245h16v16h-16zM71 245h16v16h-16zM88 245h16v16h-16zM105 245h16v16h-16zM122 245h16v16h-16zM139 245h16v16h-16zM156 245h16v16h-16zM173 245h16v16h-16zM190 245h16v16h-16zM207 245h16v16h-16zM224 245h16v16h-16zM241 245h16v16h-16zM258 245h16v16h-16zM275 245h16v16h-16zM292 245h16v16h-16zM309 245h16v16h-16zM3 262h16v16h-16zM20 262h16v16h-16zM37 262h16v16h-16zM54 262h16v16h-16zM71 262h16v16h-16zM88 262h16v16h-16zM105 262h16v16h-16zM122 262h16v16h-16zM139 262h16v16h-16zM156 262h16v16h-16zM173 262h16v16h-16zM190 262h16v16h-16zM207 262h16v16h-16zM224 262h16v16h-16zM241 262h16v16h-16zM258 262h16v16h-16zM275 262h16v16h-16zM292 262h16v16h-16zM309 262h16v16h-16zM3 279h16v16h-16zM20 279h16v16h-16zM37 279h16v16h-16zM54 279h16v16h-16zM71 279h16v16h-16zM88 279h16v16h-16zM105 279h16v16h-16zM122 279h16v16h-16zM139 279h16v16h-16zM156 279h16v16h-16zM173 279h16v16h-16zM190 279h16v16h-16zM207 279h16v16h-16zM224 279h16v16h-16zM241 279h16v16h-16zM258 279h16v16h-16zM275 279h16v16h-16zM292 279h16v16h-16zM309 279h16v16h-16z"/></clipPath><path shape-rendering="crispEdges" fill="#2e2c9b" d="M3 3h16v16h-16zM20 3h16v16h-16zM37 3h16v16h-16zM54 3h16v16h-16zM71 3h16v16h-16zM88 3h16v16h-16zM105 3h16v16h-16zM122 3h16v16h-16zM139 3h16v16h-16zM156 3h16v16h-16zM173 3h16v16h-16zM190 3h16v16h-16zM207 3h16v16h-16zM224 3h16v16h-16zM241 3h16v16h-16zM258 3h16v16h-16zM275 3h16v16h-16zM292 3h16v16h-16zM309 3h16v16h-16zM3 20h16v16h-16zM20 20h16v16h-16zM37 20h16v16h-16zM54 20h16v16h-16zM71 20h16v16h-16zM88 20h16v16h-16zM105 20h16v16h-16zM122 20h16v16h-16zM139 20h16v16h-16zM156 20h16v16h-16zM173 20h16v16h-16zM190 20h16v16h-16zM207 20h16v16h-16zM224 20h16v16h-16zM241 20h16v16h-16zM258 20h16v16h-16zM275 20h16v16h-16zM292 20h16v16h-16zM309 20h16v16h-16zM3 37h16v16h-16zM20 37h16v16h-16zM37 37h16v16h-16zM54 37h16v16h-16zM71 37h16v16h-16zM88 37h16v16h-16zM105 37h16v16h-16zM122 37h16v16h-16zM139 37h16v16h-16zM156 37h16v16h-16zM173 37h16v16h-16zM190 37h16v16h-16zM207 37h16v16h-16zM224 37h16v16h-16zM241 37h16v16h-16zM258 37h16v16h-16zM275 37h16v16h-16zM292 37h16v16h-16zM309 37h16v16h-16zM3 54h16v16h-16zM20 54h16v16h-16zM37 54h16v16h-16zM54 54h16v16h-16zM71 54h16v16h-16zM88 54h16v16h-16zM105 54h16v16h-16zM122 54h16v16h-16zM139 54h16v16h-16zM156 54h16v16h-16zM173 54h16v16h-16zM190 54h16v16h-16zM207 54h16v16h-16zM224 54h16v16h-16zM241 54h16v16h-16zM258 54h16v16h-16zM275 54h16v16h-16zM292 54h16v16h-16zM309 54h16v16h-16zM3 71h16v16h-16zM20 71h16v16h-16zM37 71h16v16h-16zM54 71h16v16h-16zM71 71h16v16h-16zM88 71h16v16h-16zM105 71h16v16h-16zM122 71h16v16h-16zM139 71h16v16h-16zM156 71h16v16h-16zM173 71h16v16h-16zM190 71h16v16h-16zM207 71h16v16h-16zM224 71h16v16h-16zM241 71h16v16h-16zM258 71h16v16h-16zM275 71h16v16h-16zM292 71h16v16h-16zM309 71h16v16h-16zM3 88h16v16h-16zM20 88h16v16h-16zM37 88h16v16h-16zM54 88h16v16h-16zM71 88h16v16h-16zM88 88h16v16h-16zM105 88h16v16h-16zM122 88h16v16h-16zM139 88h16v16h-16zM156 88h16v16h-16zM173 88h16v16h-16zM190 88h16v16h-16zM207 88h16v16h-16zM224 88h16v16h-16zM241 88h16v16h-16zM258 88h16v16h-16zM275 88h16v16h-16zM292 88h16v16h-16zM309 88h16v16h-16zM3 105h16v16h-16zM20 105h16v16h-16zM37 105h16v16h-16zM54 105h16v16h-16zM71 105h16v16h-16zM88 105h16v16h-16zM105 105h16v16h-16zM122 105h16v16h-16zM139 105h16v16h-16zM156 105h16v16h-16zM173 105h16v16h-16zM190 105h16v16h-16zM207 105h16v16h-16zM224 105h16v16h-16zM241 105h16v16h-16zM258 105h16v16h-16zM275 105h16v16h-16zM292 105h16v16h-16zM309 105h16v16h-16zM3 122h16v16h-16zM20 122h16v16h-16zM37 122h16v16h-16zM54 122h16v16h-16zM71 122h16v16h-16zM88 122h16v16h-16zM105 122h16v16h-16zM122 122h16v16h-16zM139 122h16v16h-16zM156 122h16v16h-16zM173 122h16v16h-16zM190 122h16v16h-16zM207 122h16v16h-16zM224 122h16v16h-16zM241 122h16v16h-16zM258 122h16v16h-16zM275 122h16v16h-16zM292 122h16v16h-16zM309 122h16v16h-16zM3 139h16v16h-16zM20 139h16v16h-16zM37 139h16v16h-16zM54 139h16v16h-16zM71 139h16v16h-16zM88 139h16v16h-16zM105 139h16v16h-16zM122 139h16v16h-16zM139 139h16v16h-16zM156 139h16v16h-16zM173 139h16v16h-16zM190 139h16v16h-16zM207 139h16v16h-16zM224 139h16v16h-16zM241 139h16v16h-16zM258 139h16v16h-16zM275 139h16v16h-16zM292 139h16v16h-16zM309 139h16v16h-16zM3 160h16v16h-16zM20 160h16v16h-16zM37 160h16v16h-16zM54 160h16v16h-16zM71 160h16v16h-16zM88 160h16v16h-16zM105 160h16v16h-16zM122 160h16v16h-16zM139 160h16v16h-16zM156 160h16v16h-16zM173 160h16v16h-16zM190 160h16v16h-16zM207 160h16v16h-16zM224 160h16v16h-16zM241 160h16v16h-16zM258 160h16v16h-16zM275 160h16v16h-16zM292 160h16v16h-16zM309 160h16v16h-16zM3 177h16v16h-16zM20 177h16v16h-16zM37 177h16v16h-16zM54 177h16v16h-16zM71 177h16v16h-16zM88 177h16v16h-16zM105 177h16v16h-16zM122 177h16v16h-16zM139 177h16v16h-16zM156 177h16v16h-16zM173 177h16v16h-16zM190 177h16v16h-16zM207 177h16v16h-16zM224 177h16v16h-16zM241 177h16v16h-16zM258 177h16v16h-16zM275 177h16v16h-16zM292 177h16v16h-16zM309 177h16v16h-16zM3 194h16v16h-16zM20 194h16v16h-16zM37 194h16v16h-16zM54 194h16v16h-16zM71 194h16v16h-16zM88 194h16v16h-16zM105 194h16v16h-16zM122 194h16v16h-16zM139 194h16v16h-16zM156 194h16v16h-16zM173 194h16v16h-16zM190 194h16v16h-16zM207 194h16v16h-16zM224 194h16v16h-16zM241 194h16v16h-16zM258 194h16v16h-16zM275 194h16v16h-16zM292 194h16v16h-16zM309 194h16v16h-16zM3 211h16v16h-16zM20 211h16v16h-16zM37 211h16v16h-16zM54 211h16v16h-16zM71 211h16v16h-16zM88 211h16v16h-16zM105 211h16v16h-16zM122 211h16v16h-16zM139 211h16v16h-16zM156 211h16v16h-16zM173 211h16v16h-16zM190 211h16v16h-16zM207 211h16v16h-16zM224 211h16v16h-16zM241 211h16v16h-16zM258 211h16v16h-16zM275 211h16v16h-16zM292 211h16v16h-16zM309 211h16v16h-16z"/><path shape-rendering="crispEdges" fill="#706deb" d="M9 9h10v4h-10zM9 13h4v6h-4zM20 9h16v4h-16zM37 9h10v4h-10zM43 13h4v6h-4zM54 3h16v4h-16zM54 7h4v12h-4zM71 3h16v4h-16zM88 3h16v4h-16zM100 7h4v12h-4zM113 11h8v8h-8zM122 11h16v8h-16zM139 11h8v8h-8zM166 9h6v2h-6zM164 11h8v2h-8zM162 13h6v2h-6zM162 15h4v4h-4zM173 7h16v4h-16zM190 9h6v2h-6zM190 11h8v2h-8zM194 13h6v2h-6zM196 15h4v4h-4zM207 3h4v2h-4zM207 5h6v2h-6zM209 7h6v2h-6zM211 9h6v2h-6zM213 11h6v2h-6zM215 13h6v2h-6zM217 15h6v2h-6zM219 17h4v2h-4zM224 9h16v4h-16zM230 13h4v6h-4zM253 3h4v2h-4zM251 5h6v2h-6zM249 7h6v2h-6zM247 9h6v2h-6zM245 11h6v2h-6zM243 13h6v2h-6zM241 15h6v2h-6zM241 17h4v2h-4zM262 3h12v16h-12zM275 3h4v16h-4zM292 3h4v16h-4zM313 3h12v16h-12zM9 20h4v16h-4zM24 22h8v2h-8zM22 24h12v2h-12zM22 26h4v4h-4zM30 26h4v4h-4zM22 30h12v2h-12zM24 32h8v2h-8zM43 20h4v16h-4zM54 20h4v16h-4zM77 20h4v6h-4zM71 26h16v4h-16zM77 30h4v6h-4zM100 20h4v16h-4zM113 20h8v16h-8zM139 20h8v16h-8zM160 20h4v16h-4zM177 22h8v2h-8zM175 24h12v8h-12zM177 32h8v2h-8zM198 20h4v16h-4zM213 20h4v6h-4zM213 26h10v4h-10zM213 30h4v6h-4zM224 20h4v2h-4zM236 20h4v2h-4zM224 22h6v2h-6zM234 22h6v2h-6zM226 24h12v2h-12zM228 26h8v4h-8zM226 30h12v2h-12zM224 32h6v2h-6zM234 32h6v2h-6zM224 34h4v2h-4zM236 34h4v2h-4zM247 20h4v6h-4zM241 26h10v4h-10zM247 30h4v6h-4zM262 20h12v16h-12zM275 20h4v16h-4zM294 20h4v16h-4zM309 20h2v16h-2zM315 20h10v16h-10zM9 37h4v6h-4zM9 43h10v4h-10zM20 43h16v4h-16zM43 37h4v6h-4zM37 43h10v4h-10zM54 37h4v12h-4zM54 49h16v4h-16zM71 49h16v4h-16zM100 37h4v12h-4zM88 49h16v4h-16zM113 37h8v8h-8zM122 37h16v8h-16zM139 37h8v8h-8zM162 37h4v4h-4zM162 41h6v2h-6zM164 43h8v2h-8zM166 45h6v2h-6zM173 45h16v4h-16zM196 37h4v4h-4zM194 41h6v2h-6zM190 43h8v2h-8zM190 45h6v2h-6zM219 37h4v2h-4zM217 39h6v2h-6zM215 41h6v2h-6zM213 43h6v2h-6zM211 45h6v2h-6zM209 47h6v2h-6zM207 49h6v2h-6zM207 51h4v2h-4zM230 37h4v6h-4zM224 43h16v4h-16zM241 37h4v2h-4zM241 39h6v2h-6zM243 41h6v2h-6zM245 43h6v2h-6zM247 45h6v2h-6zM249 47h6v2h-6zM251 49h6v2h-6zM253 51h4v2h-4zM264 37h10v16h-10zM275 37h6v16h-6zM296 37h4v16h-4zM309 37h4v16h-4zM317 37h8v16h-8zM3 54h16v6h-16zM3 60h6v4h-6zM3 64h6v6h-6zM13 64h6v6h-6zM20 54h16v6h-16zM20 64h16v6h-16zM37 54h16v6h-16zM47 60h6v4h-6zM37 64h6v6h-6zM47 64h6v6h-6zM58 58h12v12h-12zM71 58h16v12h-16zM88 58h12v12h-12zM105 54h16v8h-16zM105 62h8v8h-8zM122 54h16v8h-16zM139 54h16v8h-16zM147 62h8v8h-8zM156 54h16v6h-16zM156 60h10v2h-10zM156 62h8v2h-8zM156 64h6v2h-6zM168 64h4v2h-4zM156 66h6v4h-6zM166 66h6v4h-6zM173 54h16v4h-16zM173 62h16v8h-16zM190 54h16v6h-16zM196 60h10v2h-10zM198 62h8v2h-8zM190 64h4v2h-4zM200 64h6v2h-6zM190 66h6v4h-6zM200 66h6v4h-6zM211 54h12v2h-12zM213 56h10v2h-10zM207 58h2v2h-2zM215 58h8v2h-8zM207 60h4v2h-4zM217 60h6v2h-6zM207 62h6v2h-6zM219 62h4v2h-4zM207 64h8v2h-8zM221 64h2v2h-2zM207 66h10v2h-10zM207 68h12v2h-12zM224 54h16v6h-16zM224 64h6v6h-6zM234 64h6v6h-6zM241 54h12v2h-12zM241 56h10v2h-10zM241 58h8v2h-8zM255 58h2v2h-2zM241 60h6v2h-6zM253 60h4v2h-4zM241 62h4v2h-4zM251 62h6v2h-6zM241 64h2v2h-2zM249 64h8v2h-8zM247 66h10v2h-10zM245 68h12v2h-12zM266 54h8v16h-8zM275 54h8v16h-8zM298 54h4v16h-4zM309 54h6v16h-6zM319 54h6v16h-6zM3 71h6v16h-6zM13 71h6v16h-6zM20 71h16v2h-16zM20 73h4v2h-4zM32 73h4v2h-4zM20 75h2v2h-2zM34 75h2v2h-2zM20 77h2v4h-2zM26 77h4v4h-4zM34 77h2v4h-2zM20 81h2v2h-2zM34 81h2v2h-2zM20 83h4v2h-4zM32 83h4v2h-4zM20 85h16v2h-16zM37 71h6v16h-6zM47 71h6v16h-6zM58 71h12v16h-12zM71 71h6v6h-6zM81 71h6v6h-6zM71 81h6v6h-6zM81 81h6v6h-6zM88 71h12v16h-12zM105 71h8v16h-8zM122 71h16v16h-16zM147 71h8v16h-8zM156 71h4v16h-4zM164 71h8v16h-8zM173 71h16v2h-16zM173 73h4v2h-4zM185 73h4v2h-4zM173 75h2v8h-2zM187 75h2v8h-2zM173 83h4v2h-4zM185 83h4v2h-4zM173 85h16v2h-16zM190 71h8v16h-8zM202 71h4v16h-4zM207 71h6v6h-6zM217 71h6v6h-6zM207 77h6v4h-6zM207 81h6v6h-6zM217 81h6v6h-6zM228 71h8v2h-8zM230 73h4v2h-4zM224 75h2v2h-2zM238 75h2v2h-2zM224 77h4v4h-4zM236 77h4v4h-4zM224 81h2v2h-2zM238 81h2v2h-2zM230 83h4v2h-4zM228 85h8v2h-8zM241 71h6v6h-6zM251 71h6v6h-6zM251 77h6v4h-6zM241 81h6v6h-6zM251 81h6v6h-6zM268 71h6v16h-6zM275 71h10v16h-10zM300 71h4v16h-4zM309 71h8v16h-8zM321 71h4v16h-4zM3 88h6v6h-6zM13 88h6v6h-6zM3 94h6v4h-6zM3 98h16v6h-16zM20 88h16v6h-16zM20 98h16v6h-16zM37 88h6v6h-6zM47 88h6v6h-6zM47 94h6v4h-6zM37 98h16v6h-16zM58 88h12v12h-12zM71 88h16v12h-16zM88 88h12v12h-12zM105 88h8v8h-8zM105 96h16v8h-16zM122 96h16v8h-16zM147 88h8v8h-8zM139 96h16v8h-16zM156 88h6v4h-6zM166 88h6v4h-6zM156 92h6v2h-6zM168 92h4v2h-4zM156 94h8v2h-8zM156 96h10v2h-10zM156 98h16v6h-16zM173 88h16v8h-16zM173 100h16v4h-16zM190 88h6v4h-6zM200 88h6v4h-6zM190 92h4v2h-4zM200 92h6v2h-6zM198 94h8v2h-8zM196 96h10v2h-10zM190 98h16v6h-16zM207 88h12v2h-12zM207 90h10v2h-10zM207 92h8v2h-8zM221 92h2v2h-2zM207 94h6v2h-6zM219 94h4v2h-4zM207 96h4v2h-4zM217 96h6v2h-6zM207 98h2v2h-2zM215 98h8v2h-8zM213 100h10v2h-10zM211 102h12v2h-12zM224 88h6v6h-6zM234 88h6v6h-6zM224 98h16v6h-16zM245 88h12v2h-12zM247 90h10v2h-10zM241 92h2v2h-2zM249 92h8v2h-8zM241 94h4v2h-4zM251 94h6v2h-6zM241 96h6v2h-6zM253 96h4v2h-4zM241 98h8v2h-8zM255 98h2v2h-2zM241 100h10v2h-10zM241 102h12v2h-12zM270 88h4v16h-4zM275 88h12v16h-12zM302 88h4v16h-4zM309 88h10v16h-10zM323 88h2v16h-2zM3 119h16v2h-16zM20 117h16v4h-16zM37 115h16v6h-16zM54 113h16v8h-16zM71 111h16v10h-16zM88 109h16v12h-16zM105 107h16v14h-16zM122 105h16v16h-16zM153 105h2v2h-2zM151 107h4v2h-4zM149 109h6v2h-6zM147 111h8v2h-8zM145 113h10v2h-10zM143 115h12v2h-12zM141 117h14v2h-14zM139 119h16v2h-16zM156 105h2v2h-2zM156 107h4v2h-4zM156 109h6v2h-6zM156 111h8v2h-8zM156 113h10v2h-10zM156 115h12v2h-12zM156 117h14v2h-14zM156 119h16v2h-16zM173 105h4v4h-4zM177 109h4v4h-4zM173 113h4v4h-4zM177 117h4v4h-4zM190 113h4v4h-4zM198 113h4v4h-4zM194 117h4v4h-4zM202 117h4v4h-4zM207 105h4v4h-4zM215 105h4v4h-4zM211 109h4v4h-4zM219 109h4v4h-4zM207 113h4v4h-4zM215 113h4v4h-4zM211 117h4v4h-4zM219 117h4v4h-4zM224 105h8v8h-8zM232 113h8v8h-8zM243 105h4v4h-4zM251 105h4v4h-4zM241 109h16v2h-16zM243 111h4v2h-4zM251 111h4v2h-4zM241 113h16v2h-16zM243 115h4v4h-4zM251 115h4v4h-4zM270 105h4v16h-4zM275 105h12v16h-12zM304 105h4v16h-4zM309 105h12v16h-12zM3 122h16v14h-16zM20 122h16v12h-16zM37 122h16v10h-16zM54 122h16v8h-16zM71 122h16v6h-16zM88 122h16v4h-16zM105 122h16v2h-16zM139 122h16v2h-16zM141 124h14v2h-14zM143 126h12v2h-12zM145 128h10v2h-10zM147 130h8v2h-8zM149 132h6v2h-6zM151 134h4v2h-4zM153 136h2v2h-2zM156 122h16v2h-16zM156 124h14v2h-14zM156 126h12v2h-12zM156 128h10v2h-10zM156 130h8v2h-8zM156 132h6v2h-6zM156 134h4v2h-4zM156 136h2v2h-2zM177 122h12v4h-12zM173 126h4v4h-4zM181 126h8v4h-8zM177 130h12v4h-12zM173 134h4v4h-4zM181 134h8v4h-8zM190 122h16v8h-16zM194 130h4v4h-4zM202 130h4v4h-4zM190 134h4v4h-4zM198 134h4v4h-4zM211 122h4v4h-4zM219 122h4v4h-4zM207 126h4v4h-4zM215 126h4v4h-4zM211 130h4v4h-4zM219 130h4v4h-4zM207 134h4v4h-4zM215 134h4v4h-4zM232 122h8v8h-8zM224 130h8v8h-8zM241 122h2v4h-2zM247 122h4v4h-4zM255 122h2v4h-2zM241 128h2v2h-2zM247 128h4v2h-4zM255 128h2v2h-2zM241 132h2v4h-2zM247 132h4v4h-4zM255 132h2v4h-2zM241 136h16v2h-16zM275 122h16v16h-16zM309 122h16v16h-16zM3 153h16v2h-16zM20 151h16v4h-16zM37 149h16v4h-16zM54 147h16v4h-16zM71 145h16v4h-16zM88 143h16v4h-16zM105 141h16v4h-16zM122 139h16v4h-16zM139 139h16v2h-16zM156 139h16v14h-16zM173 139h16v12h-16zM190 139h16v10h-16zM190 153h16v2h-16zM207 139h16v8h-16zM207 151h16v4h-16zM224 139h16v6h-16zM224 149h16v6h-16zM241 139h16v4h-16zM241 147h16v8h-16zM258 139h16v2h-16zM258 145h16v10h-16zM275 143h16v12h-16zM292 141h16v14h-16zM309 139h16v16h-16zM3 228h16v16h-16zM20 228h16v16h-16zM37 228h16v16h-16zM54 228h16v16h-16zM71 228h16v16h-16zM88 228h16v16h-16zM105 228h16v16h-16zM122 228h16v16h-16zM139 228h16v16h-16zM156 228h16v16h-16zM173 228h16v16h-16zM190 228h16v16h-16zM207 228h16v16h-16zM224 228h16v16h-16zM241 228h16v16h-16zM258 228h16v16h-16zM275 228h16v16h-16zM292 228h16v16h-16zM309 228h16v16h-16zM3 245h16v16h-16zM20 245h16v16h-16zM37 245h16v16h-16zM54 245h16v16h-16zM71 245h16v16h-16zM88 245h16v16h-16zM105 245h16v16h-16zM122 245h16v16h-16zM139 245h16v16h-16zM156 245h16v16h-16zM173 245h16v16h-16zM190 245h16v16h-16zM207 245h16v16h-16zM224 245h16v16h-16zM241 245h16v16h-16zM258 245h16v16h-16zM275 245h16v16h-16zM292 245h16v16h-16zM309 245h16v16h-16zM3 262h16v16h-16zM20 262h16v16h-16zM37 262h16v16h-16zM54 262h16v16h-16zM71 262h16v16h-16zM88 262h16v16h-16zM105 262h16v16h-16zM122 262h16v16h-16zM139 262h16v16h-16zM156 262h16v16h-16zM173 262h16v16h-16zM190 262h16v16h-16zM207 262h16v16h-16zM224 262h16v16h-16zM241 262h16v16h-16zM258 262h16v16h-16zM275 262h16v16h-16zM292 262h16v16h-16zM309 262h16v16h-16zM3 279h16v16h-16zM20 279h16v16h-16zM37 279h16v16h-16zM54 279h16v16h-16zM71 279h16v16h-16zM88 279h16v16h-16zM105 279h16v16h-16zM122 279h16v16h-16zM139 279h16v16h-16zM156 279h16v16h-16zM173 279h16v16h-16zM190 279h16v16h-16zM207 279h16v16h-16zM224 279h16v16h-16zM241 279h16v16h-16zM258 279h16v16h-16zM275 279h16v16h-16zM292 279h16v16h-16zM309 279h16v16h-16z"/><g font-family="'Liberation Mono','DejaVu Sans Mono',monospace" font-weight="bold" font-size="21" text-anchor="middle" stroke-width="0.8" paint-order="stroke" clip-path="url(#tclip)"><text x="11" y="174" fill="#706deb" stroke="#706deb">!</text><text x="28" y="172.6" fill="#706deb" stroke="#706deb" font-size="18">@</text><text x="45" y="174" fill="#706deb" stroke="#706deb">?</text><text x="62" y="173.6" fill="#706deb" stroke="#706deb" font-size="20">&amp;</text><text x="79" y="172" fill="#706deb" stroke="#706deb" font-size="17">|</text><text x="96" y="174" fill="#706deb" stroke="#706deb" font-size="22">π</text><text x="113" y="174" fill="#706deb" stroke="#706deb">♦</text><text x="130" y="174" fill="#706deb" stroke="#706deb">♣</text><text x="147" y="174" fill="#706deb" stroke="#706deb">♥</text><text x="164" y="174" fill="#706deb" stroke="#706deb">♠</text><text x="181" y="174" fill="#706deb" stroke="#706deb" font-size="22">↑</text><text x="198" y="174" fill="#706deb" stroke="#706deb" font-size="24">←</text><text x="11" y="191" fill="#706deb" stroke="#706deb">1</text><text x="28" y="191" fill="#706deb" stroke="#706deb">2</text><text x="45" y="191" fill="#706deb" stroke="#706deb">3</text><text x="62" y="191" fill="#706deb" stroke="#706deb">4</text><text x="79" y="191" fill="#706deb" stroke="#706deb">5</text><text x="96" y="191" fill="#706deb" stroke="#706deb">6</text><text x="113" y="191" fill="#706deb" stroke="#706deb">7</text><text x="130" y="191" fill="#706deb" stroke="#706deb">8</text><text x="147" y="191" fill="#706deb" stroke="#706deb">9</text><text x="164" y="191" fill="#706deb" stroke="#706deb">0</text><text x="181" y="191" fill="#706deb" stroke="#706deb">=</text><text x="198" y="191" fill="#706deb" stroke="#706deb">+</text><text x="215" y="192.6" fill="#706deb" stroke="#706deb" font-size="32">-</text><text x="232" y="201" fill="#706deb" stroke="#706deb" font-size="30">*</text><text x="249" y="189.6" fill="#706deb" stroke="#706deb" font-size="18">/</text><text x="266" y="190.4" fill="#706deb" stroke="#706deb" font-size="19">%</text><text x="283" y="189.8" fill="#706deb" stroke="#706deb" font-size="17.5">$</text><text x="300" y="191" fill="#706deb" stroke="#706deb">£</text><text x="317" y="191" fill="#706deb" stroke="#706deb">#</text><text x="11" y="208" fill="#706deb" stroke="#706deb">A</text><text x="28" y="208" fill="#706deb" stroke="#706deb">B</text><text x="45" y="208" fill="#706deb" stroke="#706deb">C</text><text x="62" y="208" fill="#706deb" stroke="#706deb">D</text><text x="79" y="208" fill="#706deb" stroke="#706deb">E</text><text x="96" y="208" fill="#706deb" stroke="#706deb">F</text><text x="113" y="208" fill="#706deb" stroke="#706deb">G</text><text x="130" y="208" fill="#706deb" stroke="#706deb">H</text><text x="147" y="208" fill="#706deb" stroke="#706deb">I</text><text x="164" y="208" fill="#706deb" stroke="#706deb">J</text><text x="181" y="208" fill="#706deb" stroke="#706deb">K</text><text x="198" y="208" fill="#706deb" stroke="#706deb">L</text><text x="215" y="208" fill="#706deb" stroke="#706deb">M</text><text x="232" y="208" fill="#706deb" stroke="#706deb">N</text><text x="249" y="208" fill="#706deb" stroke="#706deb">O</text><text x="266" y="208" fill="#706deb" stroke="#706deb">P</text><text x="283" y="206.6" fill="#706deb" stroke="#706deb" font-size="18.5">Q</text><text x="300" y="208" fill="#706deb" stroke="#706deb">R</text><text x="317" y="208" fill="#706deb" stroke="#706deb">S</text><text x="11" y="225" fill="#706deb" stroke="#706deb">T</text><text x="28" y="225" fill="#706deb" stroke="#706deb">U</text><text x="45" y="225" fill="#706deb" stroke="#706deb">V</text><text x="62" y="225" fill="#706deb" stroke="#706deb">W</text><text x="79" y="225" fill="#706deb" stroke="#706deb">X</text><text x="96" y="225" fill="#706deb" stroke="#706deb">Y</text><text x="113" y="225" fill="#706deb" stroke="#706deb">Z</text><text x="130" y="223" fill="#706deb" stroke="#706deb">,</text><text x="147" y="225" fill="#706deb" stroke="#706deb">.</text><text x="164" y="223.4" fill="#706deb" stroke="#706deb">;</text><text x="181" y="225" fill="#706deb" stroke="#706deb">:</text><text x="198" y="225" fill="#706deb" stroke="#706deb">&quot;</text><text x="215" y="225" fill="#706deb" stroke="#706deb">&#x27;</text><text x="232" y="222.6" fill="#706deb" stroke="#706deb" font-size="16">(</text><text x="249" y="222.6" fill="#706deb" stroke="#706deb" font-size="16">)</text><text x="266" y="222.6" fill="#706deb" stroke="#706deb" font-size="16">[</text><text x="283" y="222.6" fill="#706deb" stroke="#706deb" font-size="16">]</text><text x="300" y="225" fill="#706deb" stroke="#706deb">&lt;</text><text x="317" y="225" fill="#706deb" stroke="#706deb">&gt;</text><text x="11" y="242" fill="#2e2c9b" stroke="#2e2c9b">!</text><text x="28" y="240.6" fill="#2e2c9b" stroke="#2e2c9b" font-size="18">@</text><text x="45" y="242" fill="#2e2c9b" stroke="#2e2c9b">?</text><text x="62" y="241.6" fill="#2e2c9b" stroke="#2e2c9b" font-size="20">&amp;</text><text x="79" y="240" fill="#2e2c9b" stroke="#2e2c9b" font-size="17">|</text><text x="96" y="242" fill="#2e2c9b" stroke="#2e2c9b" font-size="22">π</text><text x="113" y="242" fill="#2e2c9b" stroke="#2e2c9b">♦</text><text x="130" y="242" fill="#2e2c9b" stroke="#2e2c9b">♠</text><text x="147" y="242" fill="#2e2c9b" stroke="#2e2c9b">♣</text><text x="164" y="242" fill="#2e2c9b" stroke="#2e2c9b">♥</text><text x="181" y="242" fill="#2e2c9b" stroke="#2e2c9b" font-size="22">↑</text><text x="198" y="242" fill="#2e2c9b" stroke="#2e2c9b" font-size="24">←</text><text x="11" y="259" fill="#2e2c9b" stroke="#2e2c9b">1</text><text x="28" y="259" fill="#2e2c9b" stroke="#2e2c9b">2</text><text x="45" y="259" fill="#2e2c9b" stroke="#2e2c9b">3</text><text x="62" y="259" fill="#2e2c9b" stroke="#2e2c9b">4</text><text x="79" y="259" fill="#2e2c9b" stroke="#2e2c9b">5</text><text x="96" y="259" fill="#2e2c9b" stroke="#2e2c9b">6</text><text x="113" y="259" fill="#2e2c9b" stroke="#2e2c9b">7</text><text x="130" y="259" fill="#2e2c9b" stroke="#2e2c9b">8</text><text x="147" y="259" fill="#2e2c9b" stroke="#2e2c9b">9</text><text x="164" y="259" fill="#2e2c9b" stroke="#2e2c9b">0</text><text x="181" y="259" fill="#2e2c9b" stroke="#2e2c9b">=</text><text x="198" y="259" fill="#2e2c9b" stroke="#2e2c9b">+</text><text x="215" y="260.6" fill="#2e2c9b" stroke="#2e2c9b" font-size="32">-</text><text x="232" y="269" fill="#2e2c9b" stroke="#2e2c9b" font-size="30">*</text><text x="249" y="257.6" fill="#2e2c9b" stroke="#2e2c9b" font-size="18">/</text><text x="266" y="258.4" fill="#2e2c9b" stroke="#2e2c9b" font-size="19">%</text><text x="283" y="257.8" fill="#2e2c9b" stroke="#2e2c9b" font-size="17.5">$</text><text x="300" y="259" fill="#2e2c9b" stroke="#2e2c9b">£</text><text x="317" y="259" fill="#2e2c9b" stroke="#2e2c9b">#</text><text x="11" y="276" fill="#2e2c9b" stroke="#2e2c9b">A</text><text x="28" y="276" fill="#2e2c9b" stroke="#2e2c9b">B</text><text x="45" y="276" fill="#2e2c9b" stroke="#2e2c9b">C</text><text x="62" y="276" fill="#2e2c9b" stroke="#2e2c9b">D</text><text x="79" y="276" fill="#2e2c9b" stroke="#2e2c9b">E</text><text x="96" y="276" fill="#2e2c9b" stroke="#2e2c9b">F</text><text x="113" y="276" fill="#2e2c9b" stroke="#2e2c9b">G</text><text x="130" y="276" fill="#2e2c9b" stroke="#2e2c9b">H</text><text x="147" y="276" fill="#2e2c9b" stroke="#2e2c9b">I</text><text x="164" y="276" fill="#2e2c9b" stroke="#2e2c9b">J</text><text x="181" y="276" fill="#2e2c9b" stroke="#2e2c9b">K</text><text x="198" y="276" fill="#2e2c9b" stroke="#2e2c9b">L</text><text x="215" y="276" fill="#2e2c9b" stroke="#2e2c9b">M</text><text x="232" y="276" fill="#2e2c9b" stroke="#2e2c9b">N</text><text x="249" y="276" fill="#2e2c9b" stroke="#2e2c9b">O</text><text x="266" y="276" fill="#2e2c9b" stroke="#2e2c9b">P</text><text x="283" y="274.6" fill="#2e2c9b" stroke="#2e2c9b" font-size="18.5">Q</text><text x="300" y="276" fill="#2e2c9b" stroke="#2e2c9b">R</text><text x="317" y="276" fill="#2e2c9b" stroke="#2e2c9b">S</text><text x="11" y="293" fill="#2e2c9b" stroke="#2e2c9b">T</text><text x="28" y="293" fill="#2e2c9b" stroke="#2e2c9b">U</text><text x="45" y="293" fill="#2e2c9b" stroke="#2e2c9b">V</text><text x="62" y="293" fill="#2e2c9b" stroke="#2e2c9b">W</text><text x="79" y="293" fill="#2e2c9b" stroke="#2e2c9b">X</text><text x="96" y="293" fill="#2e2c9b" stroke="#2e2c9b">Y</text><text x="113" y="293" fill="#2e2c9b" stroke="#2e2c9b">Z</text><text x="130" y="291" fill="#2e2c9b" stroke="#2e2c9b">,</text><text x="147" y="293" fill="#2e2c9b" stroke="#2e2c9b">.</text><text x="164" y="291.4" fill="#2e2c9b" stroke="#2e2c9b">;</text><text x="181" y="293" fill="#2e2c9b" stroke="#2e2c9b">:</text><text x="198" y="293" fill="#2e2c9b" stroke="#2e2c9b">&quot;</text><text x="215" y="293" fill="#2e2c9b" stroke="#2e2c9b">&#x27;</text><text x="232" y="290.6" fill="#2e2c9b" stroke="#2e2c9b" font-size="16">(</text><text x="249" y="290.6" fill="#2e2c9b" stroke="#2e2c9b" font-size="16">)</text><text x="266" y="290.6" fill="#2e2c9b" stroke="#2e2c9b" font-size="16">[</text><text x="283" y="290.6" fill="#2e2c9b" stroke="#2e2c9b" font-size="16">]</text><text x="300" y="293" fill="#2e2c9b" stroke="#2e2c9b">&lt;</text><text x="317" y="293" fill="#2e2c9b" stroke="#2e2c9b">&gt;</text></g><rect x="20" y="160" width="16" height="16" fill="none" stroke="#22b4f0" stroke-width="2"/></svg>
<div class="" style="position:absolute;left:879px;top:591px;width:111px;height:24px;background:#e6e6e6;border-radius:1px;"></div>
<span class="t " style="left:881.94px;top:595px;font-size:14.0px;color:#111;transform:scaleX(0.9369);">Group Graphic</span>
<svg style="left:977px;top:600.0px" width="9" height="6" viewBox="0 0 9 6"><path d="M0.7 0.8L4.5 4.6 8.3 0.8" stroke="#222" stroke-width="1.5" fill="none"/></svg>
<div class="" style="position:absolute;left:1010px;top:591px;width:21.5px;height:24px;background:#333333;border-radius:4px;border-radius:4px 0 0 4px;"></div>
<span class="t " style="left:1017.90px;top:596px;font-size:13.0px;color:#fff;transform:scaleX(1.3538);">-</span>
<div class="" style="position:absolute;left:1031.5px;top:591px;width:58.5px;height:24px;background:#e6e6e6;border-radius:1px;"></div>
<span class="t " style="left:1033.73px;top:595px;font-size:14.0px;color:#111;transform:scaleX(0.9543);">200%</span>
<svg style="left:1076px;top:600.0px" width="9" height="6" viewBox="0 0 9 6"><path d="M0.7 0.8L4.5 4.6 8.3 0.8" stroke="#222" stroke-width="1.5" fill="none"/></svg>
<div class="" style="position:absolute;left:1091px;top:591px;width:23px;height:24px;background:#333333;border-radius:4px;border-radius:0 4px 4px 0;"></div>
<span class="t " style="left:1097.62px;top:596px;font-size:13.0px;color:#fff;transform:scaleX(1.1931);">+</span>
<span class="t " style="left:1134.41px;top:596px;font-size:13.0px;color:#8e8e8e;transform:scaleX(0.9099);">Spacing</span>
<span class="t " style="left:1180.76px;top:596px;font-size:13.0px;color:#ddd;">1</span>
<div class="" style="position:absolute;left:1197px;top:591px;width:22px;height:24px;background:#333333;border-radius:4px 0 0 4px;"></div>
<span class="t " style="left:1204.90px;top:596px;font-size:13.0px;color:#fff;transform:scaleX(1.3538);">-</span>
<span class="t " style="left:878.43px;top:624px;font-size:13.0px;color:#8e8e8e;transform:scaleX(0.8732);">Size</span>
<span class="t " style="left:906.80px;top:624px;font-size:13.0px;color:#ddd;transform:scaleX(0.9553);">8x8</span>
<span class="t " style="left:935.39px;top:624px;font-size:13.0px;color:#8e8e8e;transform:scaleX(0.9431);">Count</span>
<span class="t " style="left:971.35px;top:624px;font-size:13.0px;color:#ddd;">256</span>
<div class="" style="position:absolute;left:1001px;top:619px;width:21px;height:24px;background:#333333;border-radius:4px;"></div>
<span class="t " style="left:1008.90px;top:624px;font-size:13.0px;color:#fff;transform:scaleX(1.3538);">-</span>
<div class="" style="position:absolute;left:1026px;top:619px;width:25px;height:24px;background:#333333;border-radius:4px;"></div>
<span class="t " style="left:1033.82px;top:624px;font-size:13.0px;color:#fff;transform:scaleX(1.1931);">+</span>
<div class="" style="position:absolute;left:1068px;top:619px;width:105px;height:24px;background:#333333;border-radius:4px;"></div>
<span class="t " style="left:1074.82px;top:624px;font-size:13.0px;color:#fff;transform:scaleX(0.8933);">Choose Tile Set...</span>
<div class="" style="position:absolute;left:1180px;top:619px;width:39px;height:24px;background:#333333;border-radius:4px 0 0 4px;"></div>
<div style="position:absolute;left:1188px;top:619px;width:31px;height:24px;overflow:hidden">
<span class="t " style="left:-0.38px;top:5px;font-size:13.0px;color:#fff;transform:scaleX(0.7525);">Rearrange</span>
</div>
<div class="" style="position:absolute;left:1039px;top:647px;width:20px;height:1px;background:#3a3a3a;"></div>
</section>
<section id="panel-colours">
<div class="" style="position:absolute;left:879px;top:650px;width:340px;height:18px;background:#111;"></div>
<span class="t " style="left:884.50px;top:653px;font-size:10.0px;color:#fff;">Colours</span>
<div class="" style="position:absolute;left:1197px;top:651px;width:13px;height:13px;background:#1c1c1c;border-radius:3px;"></div>
<svg style="left:1199.3px;top:653.6px" width="8" height="8" viewBox="0 0 8 8"><path d="M0.8 0.8L7.2 7.2M7.2 0.8L0.8 7.2" stroke="#e8e8e8" stroke-width="1.5"/></svg>
<div class="" style="position:absolute;left:882px;top:672px;width:20px;height:20px;background:#706deb;"></div>
<span class="t " style="left:905.05px;top:680px;font-size:13.0px;color:#ddd;transform:scaleX(0.9139);">14</span>
<span class="t " style="left:935.93px;top:680px;font-size:13.0px;color:#ddd;transform:scaleX(0.9024);">0x0e</span>
<span class="t " style="left:968.00px;top:680px;font-size:13.0px;color:#ddd;transform:scaleX(0.9366);">#706deb</span>
<div class="" style="position:absolute;left:881px;top:697px;width:336px;height:75px;background:#111;box-sizing:border-box;border:1px solid #000;"></div>
<svg style="left:882px;top:697px" width="249" height="63"><g stroke="#4a4a4a" stroke-width="1" stroke-dasharray="1 1" shape-rendering="crispEdges"><path d="M0.5 0V63"/><path d="M31.5 0V63"/><path d="M62.5 0V63"/><path d="M93.5 0V63"/><path d="M124.5 0V63"/><path d="M155.5 0V63"/><path d="M186.5 0V63"/><path d="M217.5 0V63"/><path d="M248.5 0V63"/><path d="M0 0.5H249"/><path d="M0 31.5H249"/><path d="M0 62.5H249"/></g></svg>
<div class="" style="position:absolute;left:883px;top:698px;width:30px;height:30px;background:#000000;"></div>
<div class="" style="position:absolute;left:914px;top:698px;width:30px;height:30px;background:#ffffff;"></div>
<div class="" style="position:absolute;left:945px;top:698px;width:30px;height:30px;background:#813338;"></div>
<div class="" style="position:absolute;left:976px;top:698px;width:30px;height:30px;background:#75cec8;"></div>
<div class="" style="position:absolute;left:1007px;top:698px;width:30px;height:30px;background:#8e3c97;"></div>
<div class="" style="position:absolute;left:1038px;top:698px;width:30px;height:30px;background:#56ac4d;"></div>
<div class="" style="position:absolute;left:1069px;top:698px;width:30px;height:30px;background:#2e2c9b;"></div>
<div class="" style="position:absolute;left:1100px;top:698px;width:30px;height:30px;background:#edf171;"></div>
<div class="" style="position:absolute;left:883px;top:729px;width:30px;height:30px;background:#8e5029;"></div>
<div class="" style="position:absolute;left:914px;top:729px;width:30px;height:30px;background:#553800;"></div>
<div class="" style="position:absolute;left:945px;top:729px;width:30px;height:30px;background:#c46c71;"></div>
<div class="" style="position:absolute;left:976px;top:729px;width:30px;height:30px;background:#4a4a4a;"></div>
<div class="" style="position:absolute;left:1007px;top:729px;width:30px;height:30px;background:#7b7b7b;"></div>
<div class="" style="position:absolute;left:1038px;top:729px;width:30px;height:30px;background:#a9ff9f;"></div>
<div class="" style="position:absolute;left:1068px;top:728px;width:32px;height:32px;background:#706deb;box-sizing:border-box;border:2px solid #f4e400;"></div>
<svg style="left:1068px;top:728px" width="9" height="9"><path d="M0 0H9L0 9z" fill="#f4e400"/></svg>
<div class="" style="position:absolute;left:1100px;top:729px;width:30px;height:30px;background:#b2b2b2;"></div>
<div class="" style="position:absolute;left:882px;top:774px;width:103px;height:26px;background:#333333;border-radius:4px;"></div>
<span class="t " style="left:889.42px;top:778px;font-size:13.0px;color:#fff;transform:scaleX(0.8888);">Choose Palette...</span>
<div class="" style="position:absolute;left:994px;top:774px;width:83px;height:26px;background:#333333;border-radius:4px;"></div>
<span class="t " style="left:1001.07px;top:778px;font-size:13.0px;color:#fff;transform:scaleX(0.8917);">Edit Palette...</span>
<div class="" style="position:absolute;left:1086.4px;top:774px;width:89px;height:26px;background:#333333;border-radius:4px;"></div>
<span class="t " style="left:1093.68px;top:778px;font-size:13.0px;color:#fff;transform:scaleX(0.8893);">Load Palette...</span>
</section>
<div id="outside-strip">
<div class="" style="position:absolute;left:1219.5px;top:779px;width:6px;height:19px;background:linear-gradient(#c4c4c4,#e6e6e6);"></div>
<span class="t " style="left:1218.82px;top:95px;font-size:12.0px;color:#9a9a9a;">e</span>
<span class="t " style="left:1218.92px;top:227px;font-size:12.5px;color:#6f8db8;">h</span>
<div class="" style="position:absolute;left:1220.2px;top:274px;width:1.8px;height:2px;background:#b32222;"></div>
<div class="" style="position:absolute;left:1223.6px;top:274px;width:1.8px;height:2px;background:#b32222;"></div>
<div class="" style="position:absolute;left:1219.5px;top:310px;width:1.8px;height:2px;background:#b32222;"></div>
<div class="" style="position:absolute;left:1223px;top:310px;width:1.8px;height:2px;background:#b32222;"></div>
</div>
</body></html>
